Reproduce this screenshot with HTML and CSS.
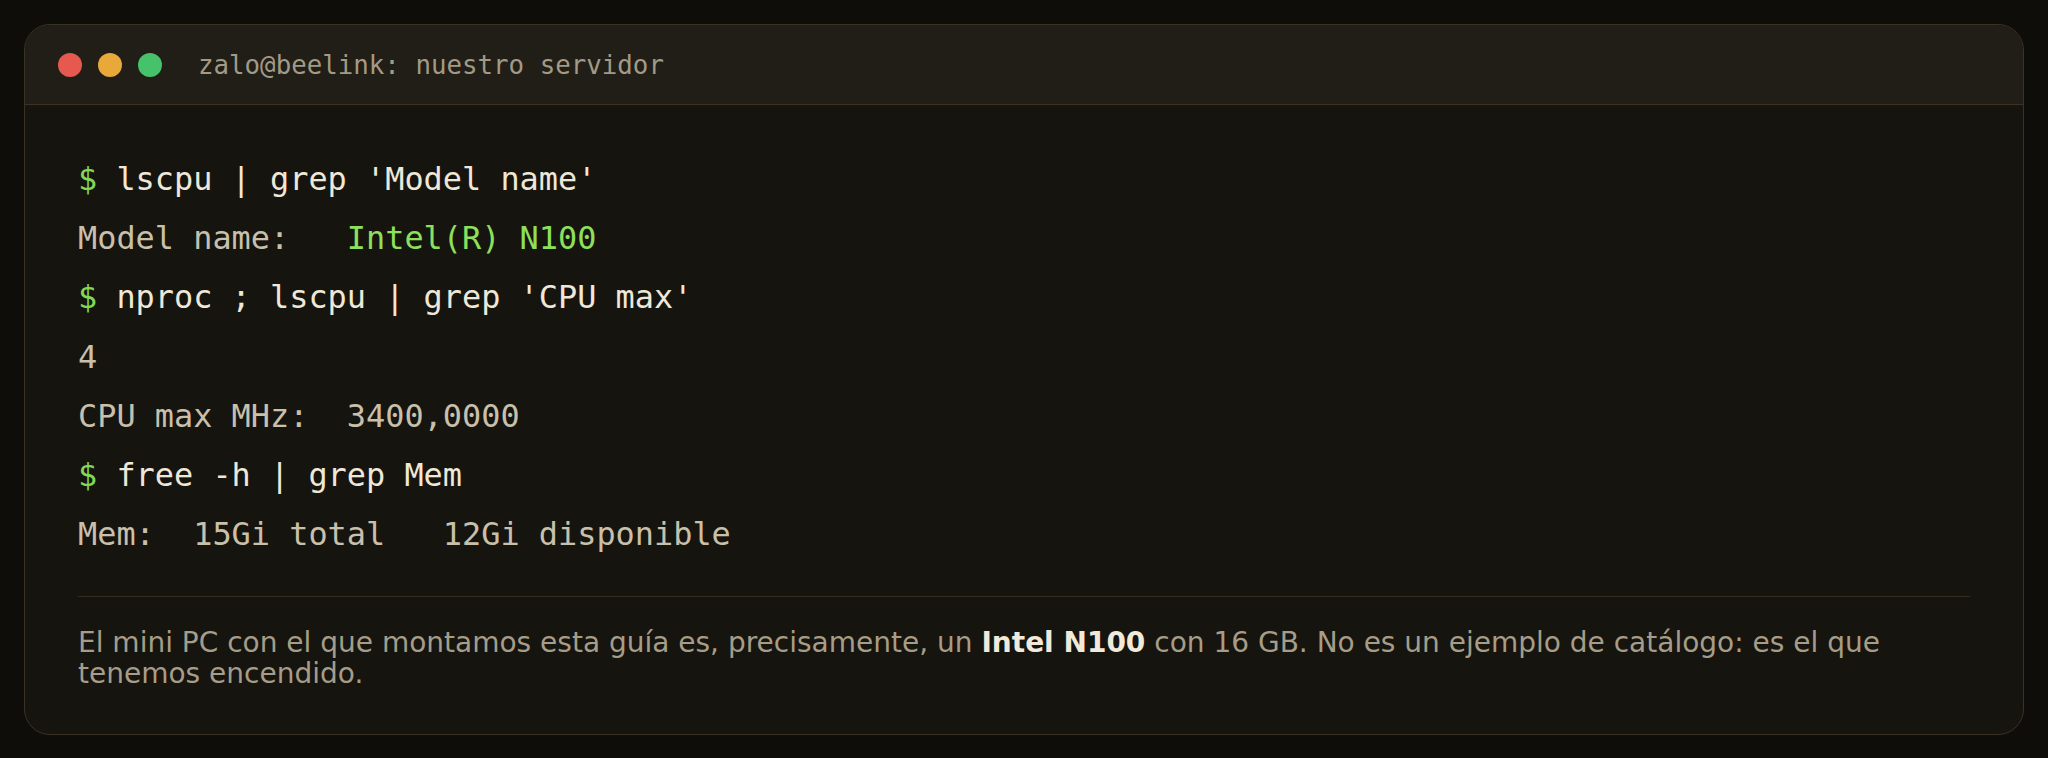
FILE: index.html
```html
<!DOCTYPE html>
<html lang="es">
<head>
<meta charset="utf-8">
<title>zalo@beelink: nuestro servidor</title>
<link rel="stylesheet" href="styles.css">
</head>
<body>
<div class="terminal">
  <div class="titlebar">
    <div class="lights">
      <span class="light red"></span>
      <span class="light yellow"></span>
      <span class="light green"></span>
    </div>
    <span class="title">zalo@beelink: nuestro servidor</span>
  </div>
  <div class="content">
    <div class="lines">
      <div class="line cmd"><span class="prompt">$</span> lscpu | grep 'Model name'</div>
      <div class="line out">Model name:   <span class="hl">Intel(R) N100</span></div>
      <div class="line cmd"><span class="prompt">$</span> nproc ; lscpu | grep 'CPU max'</div>
      <div class="line out">4</div>
      <div class="line out">CPU max MHz:  3400,0000</div>
      <div class="line cmd"><span class="prompt">$</span> free -h | grep Mem</div>
      <div class="line out">Mem:  15Gi total   12Gi disponible</div>
    </div>
    <p class="note">El mini PC con el que montamos esta guía es, precisamente, un <strong>Intel N100</strong> con 16 GB. No es un ejemplo de catálogo: es el que tenemos encendido.</p>
  </div>
</div>
</body>
</html>
```

FILE: styles.css
```css
html, body {
  margin: 0;
  padding: 0;
  background: #0e0d0a;
}

body {
  padding: 24px;
}

.terminal {
  background: #16140f;
  border: 1px solid #3a3324;
  border-radius: 26px;
  overflow: hidden;
}

.titlebar {
  height: 79px;
  display: flex;
  align-items: center;
  gap: 36px;
  padding: 0 33px;
  background: #201e16;
  border-bottom: 1px solid #3a3324;
}

.lights {
  display: flex;
  gap: 16px;
}

.light {
  width: 24px;
  height: 24px;
  border-radius: 50%;
  display: block;
}

.red { background: #e5594e; }
.yellow { background: #e8a83a; }
.green { background: #46c26b; }

.title {
  font-family: "DejaVu Sans Mono", monospace;
  font-size: 25.8px;
  color: #a39a85;
}

.content {
  padding: 45px 53px 45px;
}

.lines {
  font-family: "DejaVu Sans Mono", monospace;
  font-size: 31.9px;
  line-height: 59.2px;
  padding-bottom: 32px;
  border-bottom: 1px solid #332d20;
}

.line {
  white-space: pre;
}

.cmd { color: #efe8d8; }
.out { color: #c9c0ac; }
.prompt { color: #7fd957; }
.hl { color: #8ee05c; }

.note {
  margin: 0;
  padding-top: 30px;
  font-family: "DejaVu Sans", sans-serif;
  font-size: 28px;
  line-height: 31px;
  color: #a69d88;
}

.note strong {
  color: #f1eadb;
  font-weight: bold;
}
```
